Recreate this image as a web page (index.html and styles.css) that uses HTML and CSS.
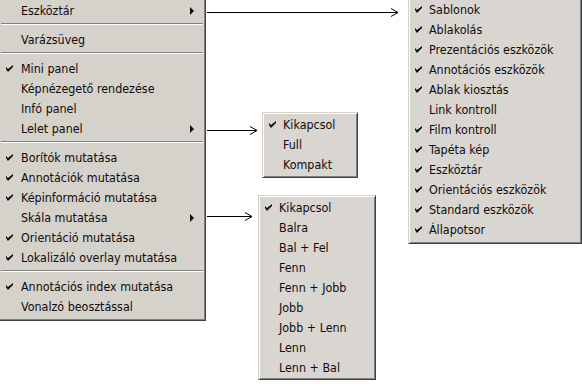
FILE: index.html
```html
<!DOCTYPE html>
<html lang="hu">
<head>
<meta charset="utf-8">
<title>Menü</title>
<link rel="stylesheet" href="styles.css">
</head>
<body>
<div class="canvas">
  <svg class="arrows" width="582" height="387" viewBox="0 0 582 387">
    <g fill="none" stroke="#000" stroke-width="1">
      <path d="M207 12.5 H398"/>
      <path d="M391 8.5 L398 12.5 L391 16.5"/>
      <path d="M207 130.5 H257"/>
      <path d="M250 126.5 L257 130.5 L250 134.5"/>
      <path d="M207 216.5 H252"/>
      <path d="M245 212.5 L252 216.5 L245 220.5"/>
    </g>
  </svg>

  <div class="menu menu-main">
    <div class="item sub">Eszköztár</div>
    <div class="sep"></div>
    <div class="item">Varázsüveg</div>
    <div class="sep"></div>
    <div class="item chk">Mini panel</div>
    <div class="item">Képnézegető rendezése</div>
    <div class="item">Infó panel</div>
    <div class="item sub">Lelet panel</div>
    <div class="sep"></div>
    <div class="item chk">Borítók mutatása</div>
    <div class="item chk">Annotációk mutatása</div>
    <div class="item chk">Képinformáció mutatása</div>
    <div class="item sub">Skála mutatása</div>
    <div class="item chk">Orientáció mutatása</div>
    <div class="item chk">Lokalizáló overlay mutatása</div>
    <div class="sep"></div>
    <div class="item chk">Annotációs index mutatása</div>
    <div class="item">Vonalzó beosztással</div>
  </div>

  <div class="menu menu-toolbar">
    <div class="item chk">Sablonok</div>
    <div class="item chk">Ablakolás</div>
    <div class="item chk">Prezentációs eszközök</div>
    <div class="item chk">Annotációs eszközök</div>
    <div class="item chk">Ablak kiosztás</div>
    <div class="item">Link kontroll</div>
    <div class="item chk">Film kontroll</div>
    <div class="item chk">Tapéta kép</div>
    <div class="item chk">Eszköztár</div>
    <div class="item chk">Orientációs eszközök</div>
    <div class="item chk">Standard eszközök</div>
    <div class="item chk">Állapotsor</div>
  </div>

  <div class="menu menu-lelet">
    <div class="item chk">Kikapcsol</div>
    <div class="item">Full</div>
    <div class="item">Kompakt</div>
  </div>

  <div class="menu menu-skala">
    <div class="item chk">Kikapcsol</div>
    <div class="item">Balra</div>
    <div class="item">Bal + Fel</div>
    <div class="item">Fenn</div>
    <div class="item">Fenn + Jobb</div>
    <div class="item">Jobb</div>
    <div class="item">Jobb + Lenn</div>
    <div class="item">Lenn</div>
    <div class="item">Lenn + Bal</div>
  </div>
</div>
</body>
</html>
```

FILE: styles.css
```css
html, body {
  margin: 0;
  padding: 0;
  background: #ffffff;
}

.canvas {
  position: relative;
  width: 582px;
  height: 387px;
  overflow: hidden;
  font-family: "DejaVu Sans Condensed", "DejaVu Sans", sans-serif;
  font-size: 12.4px;
  color: #100c0c;
}

.arrows {
  position: absolute;
  left: 0;
  top: 0;
}

.menu {
  position: absolute;
  box-sizing: border-box;
  display: flex;
  flex-direction: column;
  padding: 1px;
  background: #d5d1cb;
  border: 1px solid;
  border-color: #d4d0c8 #404040 #404040 #d4d0c8;
  box-shadow: inset 1px 1px 0 #ffffff, inset -1px -1px 0 #808080;
}

.menu-main {
  left: -2px;
  top: -2px;
  width: 208px;
  height: 323px;
}

.menu-toolbar {
  left: 408px;
  top: -3px;
  width: 174px;
  height: 247px;
  background: #d9d5d1;
}

.menu-lelet {
  left: 262px;
  top: 112px;
  width: 96px;
  height: 66px;
  background: #d9d5d1;
}

.menu-skala {
  left: 258px;
  top: 195px;
  width: 118px;
  height: 185px;
  background: #d9d5d1;
}

.item {
  position: relative;
  height: 20px;
  line-height: 22px;
  padding-left: 19px;
  white-space: nowrap;
}

.menu-main .item {
  padding-left: 21px;
}

.menu-lelet .item,
.menu-skala .item {
  padding-left: 19px;
}

.chk::before {
  content: "";
  position: absolute;
  left: 5px;
  top: 7px;
  width: 7px;
  height: 7px;
  background: #100c0c;
  clip-path: polygon(0 28%, 28% 57%, 100% 0, 100% 28%, 28% 100%, 0 57%);
}

.menu-main .chk::before {
  left: 6px;
}

.sub::after {
  content: "";
  position: absolute;
  right: 10px;
  top: 7px;
  border-left: 4px solid #100c0c;
  border-top: 4px solid transparent;
  border-bottom: 4px solid transparent;
}

.sep {
  height: 9px;
  position: relative;
}

.sep::before {
  content: "";
  position: absolute;
  left: 1px;
  right: 1px;
  top: 3px;
  height: 1px;
  background: #808080;
  box-shadow: 0 1px 0 #ffffff;
}
```
